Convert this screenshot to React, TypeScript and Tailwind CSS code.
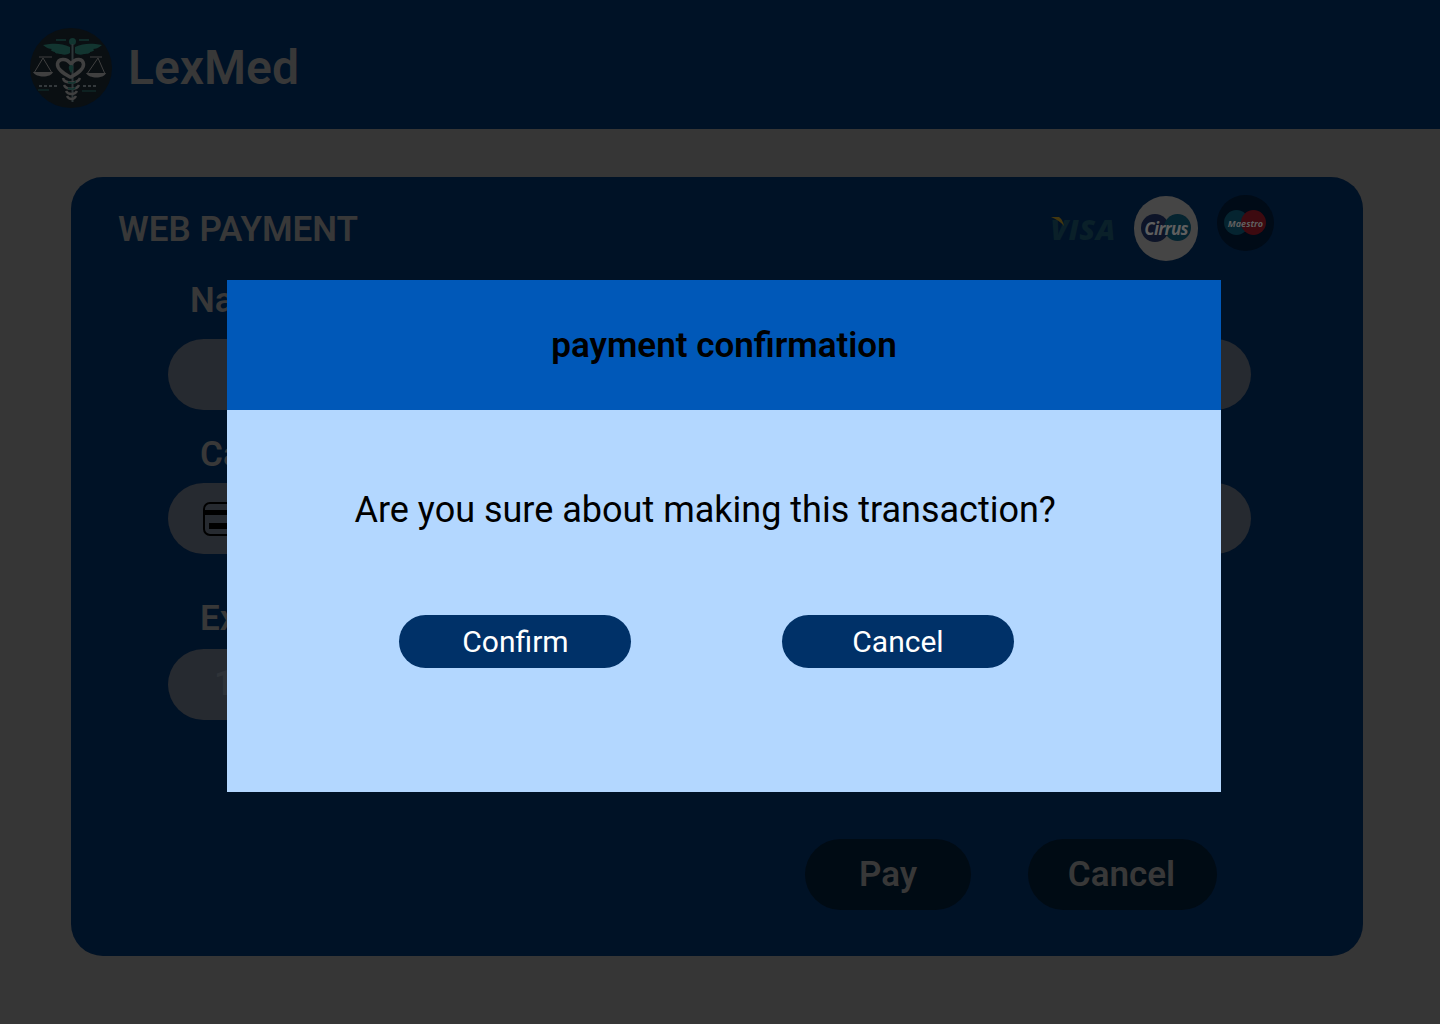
function LogoMark() {
  return (
    <svg viewBox="0 0 82 80" className="w-[82px] h-[80px]">
      <ellipse cx="41" cy="40" rx="41" ry="40" fill="#0a0f12" />
      {/* wings */}
      <path d="M40 19 C31 15 24 15 13 17 C17 20 19 21 22 21 C20 22 21 23 25 24 C24 25 28 26 31 26 C34 27 37 27 40 25 Z" fill="#123530" />
      <path d="M45 19 C54 15 61 15 72 17 C68 20 66 21 63 21 C65 22 64 23 60 24 C61 25 57 26 54 26 C51 27 48 27 45 25 Z" fill="#123530" />
      <path d="M26 12 H36 M49 12 H59" stroke="#123530" strokeWidth="1.5" />
      {/* staff */}
      <circle cx="42.5" cy="13.5" r="3.5" fill="#123530" />
      <path d="M42.5 16 V74" stroke="#2d3638" strokeWidth="2" />
      {/* heart and snake */}
      <path
        d="M40 49 C33 45 27 41 27.5 36 C28 31 36 29 41 36 C46 29 53 31 53.5 36 C54 41 48 45 41 49 Z"
        fill="none"
        stroke="#404040"
        strokeWidth="3.5"
      />
      <path d="M41 45 C38 41 38 37 41 37 C44 37 44 41 41 45 Z" fill="#123530" />
      <path
        d="M33 50 C34 56 48 56 50 50 M34 57 C36 62 47 62 49 57 M36 63 C38 67 45 67 47 63 M37 68 C39 72 44 72 46 68"
        fill="none"
        stroke="#404040"
        strokeWidth="2.5"
      />
      <path d="M38 54 C42 56 46 55 45 53 M38 60 C42 62 45 61 45 59" fill="none" stroke="#123530" strokeWidth="1.5" />
      {/* scales */}
      <path d="M9 29 H22 M13 30 L4 45 M13 30 L22 45 M72 29 H60 M68 30 L57 46 M68 30 L75 46" stroke="#404040" strokeWidth="1" fill="none" />
      <path d="M3 44 H23 C21 50 6 50 3 44 Z M56 45 H76 C74 51 59 51 56 45 Z" fill="#404040" />
      <path d="M9 58 H27 M53 58 H67" stroke="#34393c" strokeWidth="2" strokeDasharray="3 2" />
      <path d="M8 62 H19 M52 63 H66" stroke="#123530" strokeWidth="1" />
    </svg>
  );
}

function CardIcon() {
  return (
    <svg viewBox="0 0 34 34" className="w-[34px] h-[34px] shrink-0">
      <rect x="1" y="1" width="32" height="32" rx="6" fill="none" stroke="#000" strokeWidth="2" />
      <rect x="1" y="8" width="32" height="5" fill="#000" />
      <rect x="6" y="21" width="24" height="6" fill="#000" />
    </svg>
  );
}

function PayLogos() {
  return (
    <div className="flex items-center">
      <div className="relative w-[64px] h-[66px] flex items-center justify-center">
        <svg viewBox="0 0 14 10" className="absolute left-[0px] top-[22px] w-[14px] h-[10px]">
          <path d="M0 0 H8 C10 1 12 4 13 9 C10 5 5 2 0 0 Z" fill="#43370f" />
        </svg>
        <span className="font-['Open_Sans',sans-serif] font-extrabold italic text-[29px] leading-none tracking-[0.5px] text-[#0a2029]">
          VISA
        </span>
      </div>
      <div className="ml-[19px] w-[64px] h-[65px] rounded-full bg-[#454545] flex items-center justify-center relative">
        <div className="w-[28px] h-[28px] rounded-full bg-[#0d1428] absolute left-[7px] top-[18px]"></div>
        <div className="w-[27px] h-[27px] rounded-full bg-[#052430] absolute right-[7px] top-[18px]"></div>
        <span className="relative font-['Open_Sans',sans-serif] font-bold italic text-[17px] leading-none tracking-[-0.8px] text-[#5f5f5f]">
          Cirrus
        </span>
      </div>
      <div className="ml-[19px] w-[57px] h-[56px] rounded-full bg-[#000b17] relative mb-[10px] flex items-center justify-center">
        <div className="w-[25px] h-[25px] rounded-full bg-[#052430] absolute left-[7px] top-[15px]"></div>
        <div className="w-[25px] h-[25px] rounded-full bg-[#3d0a10] absolute right-[8px] top-[15px]"></div>
        <span className="relative font-['Open_Sans',sans-serif] font-bold italic text-[9px] leading-none text-[#5f5f5f]">
          Maestro
        </span>
      </div>
    </div>
  );
}

export default function App() {
  return (
    <div className="relative min-h-[1024px] bg-[#363636] font-['Roboto',sans-serif]">
      <header className="h-[129px] bg-[#001226] flex items-center pl-[30px] pt-[7px]">
        <LogoMark />
        <span className="ml-[16px] text-[48px] leading-none font-semibold text-[#383838]">LexMed</span>
      </header>

      <main className="pt-[48px] px-[71px] pb-[68px]">
        <section className="w-[1292px] h-[779px] rounded-[32px] bg-[#001226] pt-[18px] flex flex-col">
          <div className="flex items-center justify-between pl-[47px] pr-[89px] h-[66px]">
            <h1 className="text-[35px] pt-[2px] leading-none font-semibold text-[#383838]">WEB PAYMENT</h1>
            <PayLogos />
          </div>

          <div className="pl-[97px] pr-[112px] mt-[20px]">
            <label className="block h-[39px] pl-[22px] text-[35px] leading-[39px] font-semibold text-[#383838]">
              Name on card
            </label>
            <div className="mt-[19px] h-[71px] rounded-[36px] bg-[#262a30]"></div>

            <label className="block mt-[25px] h-[39px] pl-[32px] text-[35px] leading-[39px] font-semibold text-[#383838]">
              Card number
            </label>
            <div className="mt-[9px] h-[71px] rounded-[36px] bg-[#262a30] flex items-center pl-[35px]">
              <CardIcon />
            </div>

            <div className="w-[480px]">
              <label className="block mt-[45px] h-[39px] pl-[32px] text-[35px] leading-[39px] font-semibold text-[#383838]">
                Expiry
              </label>
              <div className="mt-[11px] h-[71px] rounded-[36px] bg-[#262a30] flex items-center pl-[46px] text-[35px] font-semibold text-[#2f3338]">
                12/26
              </div>
            </div>
          </div>

          <div className="flex justify-end gap-[57px] mt-[119px] pr-[146px]">
            <button className="w-[166px] h-[71px] rounded-[36px] bg-[#000b14] pt-[2px] text-[35px] font-semibold text-[#383838]">
              Pay
            </button>
            <button className="w-[189px] h-[71px] rounded-[36px] bg-[#000b14] pt-[2px] pr-[2px] text-[35px] font-semibold text-[#383838]">
              Cancel
            </button>
          </div>
        </section>
      </main>

      {/* confirmation dialog */}
      <div className="absolute left-[227px] top-[280px] w-[994px] h-[512px] bg-[#b3d7ff] flex flex-col">
        <div className="h-[130px] bg-[#0058b8] flex items-center justify-center">
          <h2 className="text-[35px] leading-none font-semibold text-black">payment confirmation</h2>
        </div>
        <p className="mt-[79px] pl-[127.5px] text-[36px] leading-[42px] text-black">
          Are you sure about making this transaction?
        </p>
        <div className="mt-[84px] pl-[172px] flex gap-[151px]">
          <button className="w-[232px] h-[53px] rounded-[27px] bg-[#003168] pl-[1px] text-[30px] text-white">Confirm</button>
          <button className="w-[232px] h-[53px] rounded-[27px] bg-[#003168] text-[30px] text-white">Cancel</button>
        </div>
      </div>
    </div>
  );
}
